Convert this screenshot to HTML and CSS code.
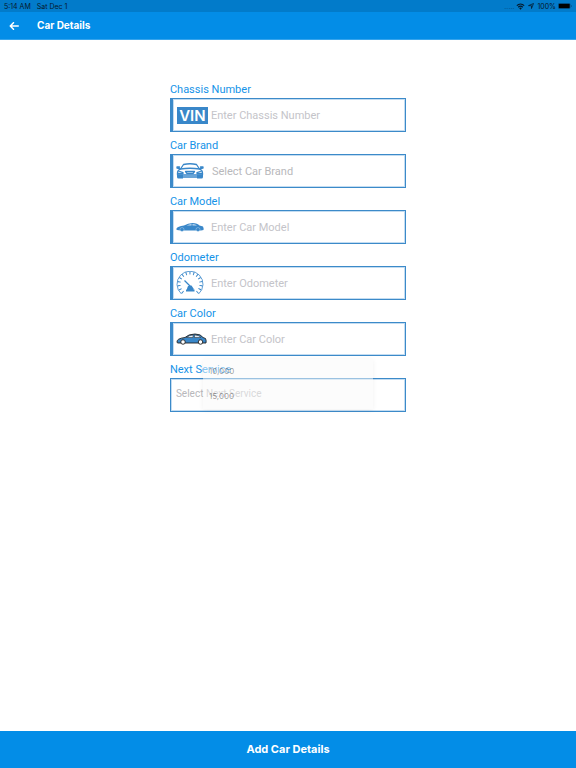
FILE: index.html
```html
<!DOCTYPE html>
<html lang="en">
<head>
    <meta charset="UTF-8">
    <meta name="viewport" content="width=device-width, initial-scale=1.0">
    <title>Car Details</title>
    <link rel="stylesheet" href="styles.css">
</head>
<body>

<!-- Status bar -->
<div class="status-bar">
    <span class="clock">5:14 AM</span>
    <span class="date">Sat Dec 1</span>
    <span class="dots">.....</span>
    <svg class="wifi" viewBox="0 0 16 12" aria-hidden="true">
        <path d="M1.5 4.5a9.5 9.5 0 0 1 13 0M4 7.2a6 6 0 0 1 8 0" fill="none" stroke="currentColor" stroke-width="2.2"/>
        <path d="M5.7 9a3.5 3.5 0 0 1 4.6 0L8 11.8z" fill="currentColor"/>
    </svg>
    <svg class="location" viewBox="0 0 12 12" aria-hidden="true">
        <path d="M11 1L7 11V5.5L1 5.2z" fill="none" stroke="currentColor" stroke-width="1.5" stroke-linejoin="round"/>
    </svg>
    <span class="percent">100%</span>
    <svg class="battery" viewBox="0 0 28 12" aria-hidden="true">
        <rect x="0.5" y="0.5" width="24" height="11" rx="2.5" fill="none" stroke="currentColor" opacity="0.5"/>
        <rect x="1.5" y="1.5" width="22" height="9" rx="1.5" fill="#000"/>
        <path d="M26 4v4q1.5-.5 1.5-2T26 4" fill="currentColor" opacity="0.5"/>
    </svg>
</div>

<header class="nav-bar">
    <button type="button" class="back" aria-label="Back">
        <svg viewBox="0 0 20 16" aria-hidden="true">
            <path d="M18.5 8H2.5M9 1.5L2.5 8 9 14.5" fill="none" stroke="currentColor" stroke-width="3" stroke-linecap="round" stroke-linejoin="round"/>
        </svg>
    </button>
    <h1>Car Details</h1>
</header>

<main>
    <form class="car-form" id="car-form">
        <div class="form-group">
            <label for="chassis">Chassis Number</label>
            <div class="field">
                <span class="vin" aria-hidden="true">VIN</span>
                <input type="text" id="chassis" placeholder="Enter Chassis Number">
            </div>
        </div>

        <div class="form-group">
            <label for="brand">Car Brand</label>
            <div class="field">
                <svg class="icon" viewBox="0 0 56 32" aria-hidden="true">
                    <g fill="none" stroke="currentColor" stroke-width="2.6" stroke-linejoin="round" stroke-linecap="round">
                        <path d="M9 12L15 3Q28 0 41 3l6 9"/>
                        <path d="M9 12Q28 9 47 12q6 2 6 8v4H3v-4q0-6 6-8z"/>
                        <path d="M7 8H2v2l5 1M49 8h5v2l-5 1"/>
                        <path d="M5 16l9 3v2H4M51 16l-9 3v2h10M19 17h18l-3 4H22z"/>
                        <path d="M14 28h28"/>
                    </g>
                    <path d="M2 23h12v8H5q-3 0-3-3zM42 23h12v5q0 3-3 3h-9z" fill="currentColor"/>
                </svg>
                <select id="brand" class="brand-select">
                    <option>Select Car Brand</option>
                </select>
            </div>
        </div>

        <div class="form-group">
            <label for="model">Car Model</label>
            <div class="field">
                <svg class="icon" viewBox="0 0 56 32" aria-hidden="true">
                    <path d="M1 19q2-4 15-6Q24 8 33 8q10 0 14 5l7 2q2 4 1 7l-5 1H9l-7-1q-2-1-1-3z" fill="currentColor"/>
                    <path d="M21 13q6-3 10-3v3zM33 10q6 0 9 3h-9z" fill="#fff" opacity="0.7"/>
                    <circle cx="12" cy="21" r="4" fill="currentColor" stroke="#fff" stroke-width="0.6"/>
                    <circle cx="44" cy="21" r="4" fill="currentColor" stroke="#fff" stroke-width="0.6"/>
                </svg>
                <input type="text" id="model" placeholder="Enter Car Model">
            </div>
        </div>

        <div class="form-group">
            <label for="odometer">Odometer</label>
            <div class="field">
                <svg class="icon gauge" viewBox="0 -3 56 48" aria-hidden="true">
                    <g fill="none" stroke="currentColor">
                        <path d="M11 43A26 26 0 1 1 45 43" stroke-width="1.6"/>
                        <path d="M14 40A22 22 0 1 1 42 40" stroke-width="6" stroke-dasharray="2 5.5"/>
                        <path d="M17 16l12 12" stroke-width="2.5"/>
                    </g>
                    <path d="M24 27l7-1 4 6v3H22v-3z" fill="currentColor"/>
                    <path d="M20 34h17v4H20z" fill="currentColor"/>
                </svg>
                <input type="text" id="odometer" placeholder="Enter Odometer">
            </div>
        </div>

        <div class="form-group">
            <label for="color">Car Color</label>
            <div class="field">
                <svg class="icon car" viewBox="0 0 62 24" aria-hidden="true">
                    <path d="M2 18q-1-7 16-9Q25 2 38 2q12 0 16 7l5 2q2 4 1 9H4q-2 0-2-2z" fill="currentColor" stroke="#222" stroke-width="1.8"/>
                    <path d="M21 9q6-5 13-5v5zM37 4q9 0 13 5H37z" fill="#e4eef8" stroke="#222" stroke-width="1"/>
                    <circle cx="14" cy="18" r="4.5" fill="#fff" stroke="#222" stroke-width="1.8"/>
                    <circle cx="49" cy="18" r="4.5" fill="#fff" stroke="#222" stroke-width="1.8"/>
                </svg>
                <input type="text" id="color" placeholder="Enter Car Color">
            </div>
        </div>

        <div class="form-group">
            <label for="service">Next Service</label>
            <div class="field plain">
                <select id="service">
                    <option>Select Next Service</option>
                    <option>10,000</option>
                    <option>15,000</option>
                </select>
            </div>
            <!-- Menu fading in over the field -->
            <ul class="service-menu">
                <li>10,000</li>
                <li>15,000</li>
            </ul>
        </div>
    </form>
</main>

<button type="submit" form="car-form" class="submit">Add Car Details</button>

</body>
</html>
```
FILE: styles.css
```css
* {
    box-sizing: border-box;
}

body {
    margin: 0;
    min-height: 100vh;
    display: flex;
    flex-direction: column;
    font-family: Inter, "Liberation Sans", sans-serif;
    background-color: #fff;
}

button,
input,
select {
    font-family: inherit;
}

.status-bar {
    display: flex;
    align-items: center;
    height: 12px;
    padding: 0 4px;
    font-size: 7px;
    color: #06192a;
    background-color: #027bca;
}

.date {
    margin-left: 6px;
}

.dots {
    margin-left: auto;
    opacity: 0.4;
}

.wifi {
    width: 9px;
    height: 7px;
    margin-left: 2px;
}

.location {
    width: 6px;
    height: 6px;
    margin: 0 3px;
}

.battery {
    width: 14px;
    height: 6px;
    margin-left: 2px;
}

.nav-bar {
    display: flex;
    align-items: center;
    height: 28px;
    padding: 0 8px;
    color: #fff;
    background-color: #038de7;
    border-bottom: 1px solid #36a4ec;
}

.back {
    display: flex;
    justify-content: center;
    width: 12px;
    padding: 0;
    border: 0;
    color: inherit;
    background: none;
    cursor: pointer;
}

.back svg {
    width: 10px;
    height: 8px;
    flex: none;
}

.nav-bar h1 {
    margin: 0 0 0 17px;
    padding-bottom: 1px;
    font-size: 10px;
    font-weight: 700;
}

main {
    flex: 1;
    padding-top: 43px;
}

.car-form {
    width: 41%;
    min-width: 200px;
    margin: 0 auto;
    font-family: Roboto, "Liberation Sans", sans-serif;
}

.form-group {
    position: relative;
    margin-bottom: 6px;
}

.form-group label {
    display: block;
    font-size: 11px;
    line-height: 16px;
    color: #1593e8;
}

.form-group:first-child {
    margin-top: -1px;
}

.field {
    display: flex;
    align-items: center;
    height: 34px;
    border: 1px solid #3c8ac9;
    border-left-width: 3px;
    padding: 0 3px;
    box-shadow: inset 0 0 0 1px #c3dcf1;
}

.field.plain {
    border-left-width: 1px;
    padding: 0 5px 3px;
}

.field input,
.field select {
    flex: 1;
    min-width: 0;
    height: 100%;
    padding: 0;
    border: 0;
    outline: 0;
    appearance: none;
    font-size: 11px;
    color: #b8b8bb;
    background: none;
}

.field input {
    color: #333;
}

.field input::placeholder {
    color: #c4c4c9;
    opacity: 1;
}

.field .brand-select {
    margin-left: 1px;
}

.field.plain select {
    font-size: 10px;
}

.icon {
    flex: none;
    width: 28px;
    height: 16px;
    margin-right: 7px;
    color: #3987c9;
}

.icon.gauge {
    height: 24px;
}

.icon.car {
    width: 31px;
    height: 12px;
    margin-right: 4px;
}

.vin {
    flex: none;
    width: 31px;
    margin: 0 3px 0 1px;
    font-family: Inter, "Liberation Sans", sans-serif;
    font-size: 15px;
    font-weight: 600;
    line-height: 17px;
    text-align: center;
    color: #fff;
    background-color: #3987c9;
}

.service-menu {
    position: absolute;
    top: -3px;
    left: 33px;
    right: 33px;
    margin: 0;
    padding: 0 6px;
    list-style: none;
    font-family: Inter, "Liberation Sans", sans-serif;
    font-size: 8px;
    line-height: 25px;
    color: rgba(0, 0, 0, 0.4);
    background-color: rgba(250, 250, 250, 0.5);
    box-shadow: 0 1px 5px rgba(0, 0, 0, 0.06);
}

.submit {
    height: 37px;
    padding-bottom: 2px;
    border: 0;
    font-size: 11px;
    font-weight: 700;
    color: #fff;
    background-color: #038de7;
    cursor: pointer;
}
```
